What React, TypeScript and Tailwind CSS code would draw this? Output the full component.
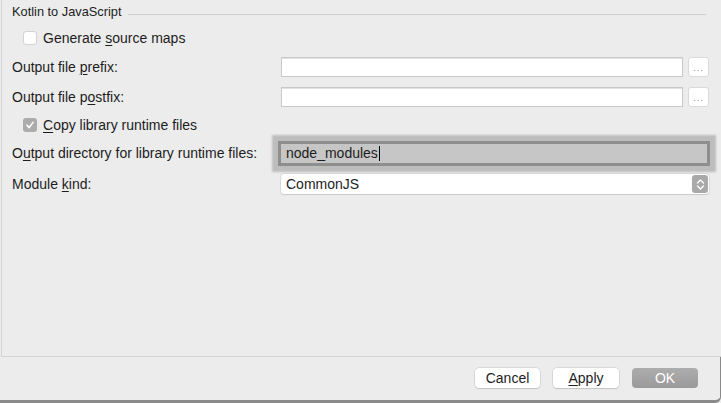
import React from 'react';

const font = { fontFamily: '"Liberation Sans", Arial, sans-serif' };

function Mn({ children }: { children: React.ReactNode }) {
  return <span className="underline underline-offset-2 decoration-1">{children}</span>;
}

function CheckBox({ checked }: { checked?: boolean }) {
  if (checked) {
    return (
      <div className="w-[14px] h-[14px] rounded-[3px] bg-[#ababab] flex items-center justify-center">
        <svg width="10" height="10" viewBox="0 0 10 10">
          <path d="M2 5.2 L4.2 7.6 L8 2.4" fill="none" stroke="#fff" strokeWidth="1.6" strokeLinecap="round" strokeLinejoin="round" />
        </svg>
      </div>
    );
  }
  return <div className="w-[14px] h-[14px] rounded-[3px] bg-white border border-[#d4d4d4]" />;
}

function TextField() {
  return <div className="w-[402px] h-[20px] bg-white border border-[#c9c9c9] shadow-[inset_0_1px_0_#e2e2e2]" />;
}

function BrowseButton() {
  return (
    <div className="ml-[5px] w-[21px] h-[20px] bg-white rounded-[3px] border border-[#dadada] flex items-end justify-center pb-[3px]">
      <span className="text-[9px] leading-none text-[#8a8a8a] tracking-[1px]">...</span>
    </div>
  );
}

export default function App() {
  return (
    <div className="w-[721px] h-[403px] bg-[#ececec] text-[#1d1d1d] overflow-hidden" style={font}>
      {/* settings panel */}
      <div className="ml-px h-[357px] border-l border-b border-[#d3d3d3] pl-[10px] flex flex-col text-[14px]">
        <div className="h-[24px] flex items-center">
          <span className="text-[12.8px]">Kotlin to JavaScript</span>
          <div className="ml-[6px] mt-[5px] w-[578px] h-px bg-[#d0d0d0]" />
        </div>

        <div className="h-[28px] flex items-center pl-[11px]">
          <CheckBox />
          <span className="ml-[6px]">Generate <Mn>s</Mn>ource maps</span>
        </div>

        <div className="h-[30px] flex items-center">
          <div className="w-[269px]">Output file <Mn>p</Mn>refix:</div>
          <TextField />
          <BrowseButton />
        </div>

        <div className="h-[30px] flex items-center">
          <div className="w-[269px]">Output file p<Mn>o</Mn>stfix:</div>
          <TextField />
          <BrowseButton />
        </div>

        <div className="h-[26px] flex items-center pl-[11px]">
          <CheckBox checked />
          <span className="ml-[6px]"><Mn>C</Mn>opy library runtime files</span>
        </div>

        <div className="h-[30px] flex items-center">
          <div className="w-[266px]">O<Mn>u</Mn>tput directory for library runtime files:</div>
          <div className="w-[432px] h-[25px] bg-[#c6c6c6] border-[3px] border-[#8e8e8e] shadow-[0_0_2px_6px_#bdbdbd] flex items-center pl-[5px]">
            <span>node_modules</span>
            <span className="w-px h-[15px] bg-black ml-px" />
          </div>
        </div>

        <div className="h-[32px] flex items-center">
          <div className="w-[269px]">Module <Mn>k</Mn>ind:</div>
          <div className="w-[428px] h-[20px] bg-white rounded-[3px] shadow-[0_0_0_0.5px_#c6c6c6,0_1px_1px_#cfcfcf] flex items-center pl-[5px] pr-px">
            <span className="flex-1">CommonJS</span>
            <div className="w-[16px] h-[18px] rounded-[3px] bg-[#a9a9a9] flex items-center justify-center">
              <svg width="9" height="13" viewBox="0 0 9 13">
                <path d="M1.5 5 L4.5 2 L7.5 5 M1.5 8 L4.5 11 L7.5 8" fill="none" stroke="#fff" strokeWidth="1.3" strokeLinecap="round" strokeLinejoin="round" />
              </svg>
            </div>
          </div>
        </div>
      </div>

      {/* button bar */}
      <div className="h-[46px] border-b-[3px] border-r border-[#8a8a8a] rounded-br-[6px] flex items-start justify-end pt-[11px] pr-[22px] gap-[13px] text-[14px]">
        <div className="w-[65px] h-[20px] bg-white rounded-[4px] shadow-[0_0_0_0.5px_#c4c4c4,0_1px_1px_#c8c8c8] flex items-center justify-center">Cancel</div>
        <div className="w-[66px] h-[20px] bg-white rounded-[4px] shadow-[0_0_0_0.5px_#c4c4c4,0_1px_1px_#c8c8c8] flex items-center justify-center"><Mn>A</Mn>pply</div>
        <div className="w-[66px] h-[20px] rounded-[4px] bg-gradient-to-b from-[#adadad] to-[#9a9a9a] text-white flex items-center justify-center">OK</div>
      </div>
    </div>
  );
}
